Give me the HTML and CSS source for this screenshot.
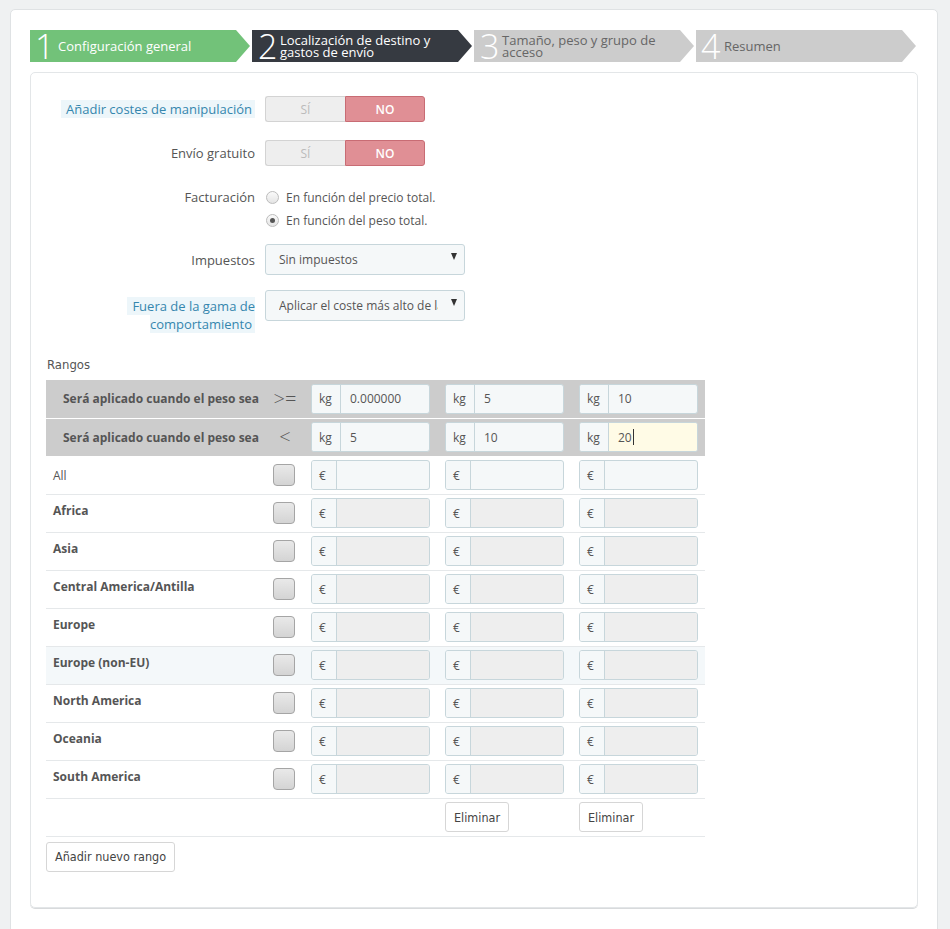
FILE: index.html
```html
<!DOCTYPE html>
<html lang="es">
<head>
<meta charset="utf-8">
<title>Transportista</title>
<link rel="stylesheet" href="styles.css">
</head>
<body>
<div class="page">
  <div class="steps">
    <div class="step done"><span class="num">1</span><span class="txt">Configuración general</span></div>
    <div class="step current"><span class="num">2</span><span class="txt">Localización de destino y<br>gastos de envío</span></div>
    <div class="step todo"><span class="num">3</span><span class="txt">Tamaño, peso y grupo de<br>acceso</span></div>
    <div class="step todo"><span class="num">4</span><span class="txt">Resumen</span></div>
  </div>

  <div class="panel">
    <div class="row r-toggle">
      <div class="lbl"><span class="tip">Añadir costes de manipulación</span></div>
      <div class="toggle"><span class="yes">SÍ</span><span class="no">NO</span></div>
    </div>
    <div class="row r-toggle r2">
      <div class="lbl">Envío gratuito</div>
      <div class="toggle"><span class="yes">SÍ</span><span class="no">NO</span></div>
    </div>
    <div class="row r-radio">
      <div class="lbl lbl-top">Facturación</div>
      <div class="radios">
        <div class="radio"><span class="circle"></span>En función del precio total.</div>
        <div class="radio"><span class="circle on"></span>En función del peso total.</div>
      </div>
    </div>
    <div class="row r-select">
      <div class="lbl">Impuestos</div>
      <div class="select"><span class="val">Sin impuestos</span><span class="caret"></span></div>
    </div>
    <div class="row r-select2">
      <div class="lbl lbl-two"><span class="tip">Fuera de la gama de comportamiento</span></div>
      <div class="select"><span class="val">Aplicar el coste más alto de la gama definida</span><span class="caret"></span></div>
    </div>

    <div class="rangos">Rangos</div>
    <table class="ranges">
      <tr class="head">
        <td class="c-name">Será aplicado cuando el peso sea</td>
        <td class="c-op">&gt;=</td>
        <td class="c-in"><div class="ig"><span class="pre kg">kg</span><span class="fld">0.000000</span></div></td>
        <td class="c-in"><div class="ig"><span class="pre kg">kg</span><span class="fld">5</span></div></td>
        <td class="c-in"><div class="ig"><span class="pre kg">kg</span><span class="fld">10</span></div></td>
      </tr>
      <tr class="head">
        <td class="c-name">Será aplicado cuando el peso sea</td>
        <td class="c-op">&lt;</td>
        <td class="c-in"><div class="ig"><span class="pre kg">kg</span><span class="fld">5</span></div></td>
        <td class="c-in"><div class="ig"><span class="pre kg">kg</span><span class="fld">10</span></div></td>
        <td class="c-in"><div class="ig focus"><span class="pre kg">kg</span><span class="fld">20<span class="cursor"></span></span></div></td>
      </tr>
      <tr class="zone">
        <td class="c-name normal">All</td>
        <td class="c-op"><span class="cb"></span></td>
        <td class="c-in"><div class="ig"><span class="pre">€</span><span class="fld"></span></div></td>
        <td class="c-in"><div class="ig"><span class="pre">€</span><span class="fld"></span></div></td>
        <td class="c-in"><div class="ig"><span class="pre">€</span><span class="fld"></span></div></td>
      </tr>
      <tr class="zone">
        <td class="c-name">Africa</td>
        <td class="c-op"><span class="cb"></span></td>
        <td class="c-in"><div class="ig dis"><span class="pre">€</span><span class="fld"></span></div></td>
        <td class="c-in"><div class="ig dis"><span class="pre">€</span><span class="fld"></span></div></td>
        <td class="c-in"><div class="ig dis"><span class="pre">€</span><span class="fld"></span></div></td>
      </tr>
      <tr class="zone">
        <td class="c-name">Asia</td>
        <td class="c-op"><span class="cb"></span></td>
        <td class="c-in"><div class="ig dis"><span class="pre">€</span><span class="fld"></span></div></td>
        <td class="c-in"><div class="ig dis"><span class="pre">€</span><span class="fld"></span></div></td>
        <td class="c-in"><div class="ig dis"><span class="pre">€</span><span class="fld"></span></div></td>
      </tr>
      <tr class="zone">
        <td class="c-name">Central America/Antilla</td>
        <td class="c-op"><span class="cb"></span></td>
        <td class="c-in"><div class="ig dis"><span class="pre">€</span><span class="fld"></span></div></td>
        <td class="c-in"><div class="ig dis"><span class="pre">€</span><span class="fld"></span></div></td>
        <td class="c-in"><div class="ig dis"><span class="pre">€</span><span class="fld"></span></div></td>
      </tr>
      <tr class="zone">
        <td class="c-name">Europe</td>
        <td class="c-op"><span class="cb"></span></td>
        <td class="c-in"><div class="ig dis"><span class="pre">€</span><span class="fld"></span></div></td>
        <td class="c-in"><div class="ig dis"><span class="pre">€</span><span class="fld"></span></div></td>
        <td class="c-in"><div class="ig dis"><span class="pre">€</span><span class="fld"></span></div></td>
      </tr>
      <tr class="zone hover">
        <td class="c-name">Europe (non-EU)</td>
        <td class="c-op"><span class="cb"></span></td>
        <td class="c-in"><div class="ig dis"><span class="pre">€</span><span class="fld"></span></div></td>
        <td class="c-in"><div class="ig dis"><span class="pre">€</span><span class="fld"></span></div></td>
        <td class="c-in"><div class="ig dis"><span class="pre">€</span><span class="fld"></span></div></td>
      </tr>
      <tr class="zone">
        <td class="c-name">North America</td>
        <td class="c-op"><span class="cb"></span></td>
        <td class="c-in"><div class="ig dis"><span class="pre">€</span><span class="fld"></span></div></td>
        <td class="c-in"><div class="ig dis"><span class="pre">€</span><span class="fld"></span></div></td>
        <td class="c-in"><div class="ig dis"><span class="pre">€</span><span class="fld"></span></div></td>
      </tr>
      <tr class="zone">
        <td class="c-name">Oceania</td>
        <td class="c-op"><span class="cb"></span></td>
        <td class="c-in"><div class="ig dis"><span class="pre">€</span><span class="fld"></span></div></td>
        <td class="c-in"><div class="ig dis"><span class="pre">€</span><span class="fld"></span></div></td>
        <td class="c-in"><div class="ig dis"><span class="pre">€</span><span class="fld"></span></div></td>
      </tr>
      <tr class="zone">
        <td class="c-name">South America</td>
        <td class="c-op"><span class="cb"></span></td>
        <td class="c-in"><div class="ig dis"><span class="pre">€</span><span class="fld"></span></div></td>
        <td class="c-in"><div class="ig dis"><span class="pre">€</span><span class="fld"></span></div></td>
        <td class="c-in"><div class="ig dis"><span class="pre">€</span><span class="fld"></span></div></td>
      </tr>
      <tr class="zone del">
        <td class="c-name"></td>
        <td class="c-op"></td>
        <td class="c-in"></td>
        <td class="c-in"><span class="btn">Eliminar</span></td>
        <td class="c-in"><span class="btn">Eliminar</span></td>
      </tr>
    </table>
    <span class="btn add">Añadir nuevo rango</span>
  </div>
</div>
</body>
</html>
```

FILE: styles.css
```css
* { box-sizing: border-box; }
html, body { margin: 0; padding: 0; }
body {
  background: #eff1f2;
  font-family: "Open Sans", "DejaVu Sans", sans-serif;
  font-size: 13px;
  color: #555;
}
.page {
  margin: 9px 0 0 10px;
  width: 928px;
  background: #fff;
  border: 1px solid #dfe2e4;
  border-radius: 5px;
  padding: 20px 19px 40px 19px;
}
.steps { display: flex; gap: 2px; height: 32px; }
.step {
  width: 220px;
  height: 32px;
  display: flex;
  align-items: center;
  clip-path: polygon(0 0, 206px 0, 220px 50%, 206px 100%, 0 100%);
}
.step .num {
  font-size: 34px;
  font-weight: 300;
  line-height: 32px;
  padding-left: 5px;
  width: 28px;
  flex: none;
}
.step .txt { font-size: 13px; line-height: 12px; margin-top: -1px; }
.step.done { background: #72c279; color: #fff; }
.step.current { background: #363a41; color: #fff; }
.step.todo { background: #cccccc; color: #666; }
.step.todo .num { color: #fff; }
.step:nth-child(2) .num, .step:nth-child(3) .num { padding-left: 6px; }

.panel {
  margin-top: 10px;
  border: 1px solid #e3e6e8;
  border-radius: 5px;
  padding: 23px 15px 35px 15px;
  box-shadow: 0 1px 0 #d8dadc;
}
.row { display: flex; align-items: center; }
.lbl {
  width: 209px;
  text-align: right;
  flex: none;
  margin-right: 10px;
  line-height: 18px;
}
.tip {
  background: #edf6fa;
  color: #3586ae;
  padding: 0 3px 0 5px;
}
.r-toggle { height: 26px; }
.r2 { margin-top: 18px; }
.toggle { display: flex; height: 26px; width: 160px; }
.toggle span {
  width: 80px;
  display: flex;
  align-items: center;
  justify-content: center;
  font-size: 12px;
}
.toggle .yes {
  background: #eeeeee;
  border: 1px solid #d3d3d3;
  border-right: none;
  border-radius: 3px 0 0 3px;
  color: #bbb;
}
.toggle .no {
  background: #e08f95;
  border: 1px solid #c86c74;
  border-radius: 0 3px 3px 0;
  color: #fff;
  font-weight: 600;
}
.r-radio { margin-top: 20px; align-items: flex-start; }
.lbl-top { line-height: 23px; }
.radio {
  height: 23px;
  display: flex;
  align-items: center;
  font-size: 12px;
  color: #555;
}
.circle {
  width: 13px; height: 13px;
  border-radius: 50%;
  border: 1px solid #bcbcbc;
  background: linear-gradient(#fafafa, #e4e4e4);
  margin: 0 7px 0 1px;
  display: inline-flex;
  align-items: center;
  justify-content: center;
}
.circle.on::after {
  content: "";
  width: 5px; height: 5px;
  border-radius: 50%;
  background: #555;
}
.r-select { margin-top: 12px; }
.r-select2 { margin-top: 15px; align-items: flex-start; }
.lbl-two { padding-top: 7px; }
.select {
  width: 200px;
  height: 31px;
  border: 1px solid #c7d6db;
  border-radius: 3px;
  background: #f5f8f9;
  display: flex;
  align-items: center;
  padding: 0 7px 0 13px;
  justify-content: space-between;
  font-size: 12px;
  color: #555;
}
.select .val { white-space: nowrap; overflow: hidden; width: 159px; flex: none; }
.caret {
  width: 0; height: 0;
  border-left: 3.5px solid transparent;
  border-right: 3.5px solid transparent;
  border-top: 7px solid #333;
  margin-top: -6px;
}
.rangos {
  margin-top: 22px;
  margin-left: 1px;
  line-height: 20px;
  font-family: "Liberation Sans Narrow", "DejaVu Sans Condensed", sans-serif;
  font-size: 13px;
  color: #555;
  margin-bottom: 5px;
}
.ranges {
  border-collapse: collapse;
  width: 659px;
  table-layout: fixed;
  font-size: 12px;
}
.ranges td { padding: 0; height: 38px; vertical-align: middle; }
.c-name { width: 219px; }
.c-op { width: 38px; text-align: center; }
.c-in { width: 134px; padding-left: 8px !important; }
.head td { background: #cccccc; border-bottom: 1px solid #fff; }
.head .c-name { padding-left: 17px; font-weight: 700; color: #555; }
.head .c-op { font-size: 20px; font-weight: 300; color: #555; padding-left: 2px; line-height: 20px; }
.zone td { border-bottom: 1px solid #e5e8ea; }
.zone .c-name {
  padding-left: 7px;
  font-weight: 700;
  color: #555;
  vertical-align: top;
  padding-top: 7px;
  line-height: 18px;
}
.zone .c-name.normal { font-weight: 400; vertical-align: middle; padding-top: 1px; }
.zone.hover td { background: #f4f8fa; }
.cb {
  display: inline-block;
  width: 22px; height: 22px;
  border: 1px solid #a5a5a5;
  border-radius: 4px;
  background: linear-gradient(#e9e9e9, #d4d4d4);
  vertical-align: middle;
}
.ig {
  width: 119px;
  height: 30px;
  display: flex;
  border: 1px solid #c7d6db;
  border-radius: 3px;
  background: #f5f8f9;
  overflow: hidden;
}
.ig .pre {
  width: 25px;
  flex: none;
  border-right: 1px solid #c7d6db;
  display: flex;
  align-items: center;
  padding-left: 7px;
  color: #555;
  background: #f5f8f9;
}
.ig .pre.kg { width: 29px; }
.ig .fld {
  flex: 1;
  display: flex;
  align-items: center;
  padding-left: 9px;
  color: #555;
}
.ig.dis .fld { background: #eeeeee; }
.ig.focus .fld { background: #fffbe6; }
.cursor {
  display: inline-block;
  width: 1px;
  height: 16px;
  background: #333;
  margin-left: 1px;
}
.btn {
  display: inline-flex;
  align-items: center;
  height: 30px;
  padding: 0 8px;
  border: 1px solid #d6d6d6;
  border-radius: 3px;
  background: #fff;
  font-family: "Liberation Sans Narrow", "DejaVu Sans Condensed", sans-serif;
  font-size: 12.5px;
  color: #444;
}
.add { margin-top: 5px; }
```
